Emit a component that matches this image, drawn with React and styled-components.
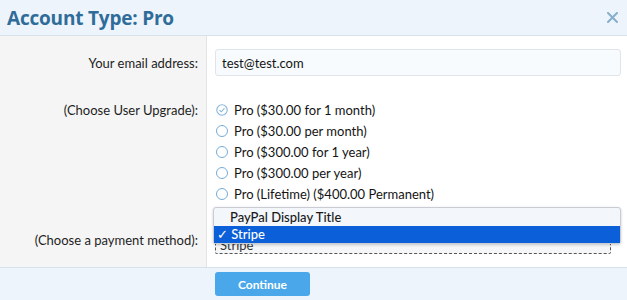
import React from 'react';
import styled, { createGlobalStyle } from 'styled-components';

const GlobalStyle = createGlobalStyle`
    html, body {
        margin: 0;
        padding: 0;
        background: #fff;
    }
    body {
        font-family: Lato, "Open Sans", sans-serif;
        font-size: 13px;
        color: #141414;
    }
`

const plans = [
    'Pro ($30.00 for 1 month)',
    'Pro ($30.00 per month)',
    'Pro ($300.00 for 1 year)',
    'Pro ($300.00 per year)',
    'Pro (Lifetime) ($400.00 Permanent)',
]

const CheckMark = () => (
    <svg width="12" height="12" viewBox="0 0 12 12">
        <circle cx="6" cy="6" r="5.2" fill="none" stroke="#86b6dc" strokeWidth="1.1" />
        <path d="M3.5 6.1 L5.2 7.8 L8.5 4.3" fill="none" stroke="#86b6dc" strokeWidth="1.1" />
    </svg>
)

const CloseIcon = () => (
    <svg width="11" height="11" viewBox="0 0 11 11">
        <path d="M1 1 L10 10 M10 1 L1 10" stroke="#86aecd" strokeWidth="2" strokeLinecap="round" />
    </svg>
)

const App = () => {
    return (
        <>
            <GlobalStyle />
            <Overlay>
                <Header>
                    <h2>Account Type: Pro</h2>
                    <Close><CloseIcon /></Close>
                </Header>
                <Body>
                    <Row top={13}>
                        <Label pad={6}>Your email address:</Label>
                        <Field>
                            <Input>test@test.com</Input>
                        </Field>
                    </Row>
                    <Row top={26}>
                        <Label pad={0}>(Choose User Upgrade):</Label>
                        <Field>
                            <Radios>
                                {plans.map((p, i) => (
                                    <Radio key={p}>
                                        {i === 0 ? <CheckMark /> : <Circle />}
                                        <span>{p}</span>
                                    </Radio>
                                ))}
                            </Radios>
                        </Field>
                    </Row>
                    <Row top={6} last>
                        <Label pad={24}>(Choose a payment method):</Label>
                        <Field>
                            <SelectWrap>
                                <Select>Stripe</Select>
                                <Arrow />
                                <Popup>
                                    <Option>PayPal Display Title</Option>
                                    <Option selected>&#x2713; Stripe</Option>
                                </Popup>
                            </SelectWrap>
                        </Field>
                    </Row>
                </Body>
                <Footer>
                    <Button>Continue</Button>
                </Footer>
            </Overlay>
        </>
    )
}

const Overlay = styled.div`
    width: 627px;
    height: 300px;
    display: flex;
    flex-direction: column;
    overflow: hidden;
`

const Header = styled.div`
    height: 35px;
    flex: none;
    background: #edf4fb;
    border-bottom: 1px solid #d8e2ea;
    display: flex;
    align-items: center;
    justify-content: space-between;
    padding: 0 7px;
    box-sizing: content-box;
    h2 {
        margin: 0;
        font-family: "Open Sans", Lato, sans-serif;
        font-weight: 700;
        font-size: 19px;
        color: #2f6c9a;
        letter-spacing: -0.2px;
    }
`

const Close = styled.span`
    display: flex;
    margin-right: 2px;
`

const Body = styled.div`
    flex: 1;
    display: flex;
    flex-direction: column;
    background: linear-gradient(to right, #f5f5f5 0, #f5f5f5 206px, #e4e4e4 206px, #e4e4e4 207px, #fff 207px);
`

const Row = styled.div`
    display: grid;
    grid-template-columns: 207px 1fr;
    padding-top: ${p => p.top}px;
    flex: ${p => (p.last ? 1 : 'none')};
`

const Label = styled.div`
    text-align: right;
    padding-right: 9px;
    padding-top: ${p => p.pad}px;
    line-height: 16px;
    color: #1e1e1e;
`

const Field = styled.div`
    padding: 0 6px 0 8px;
`

const Input = styled.div`
    height: 27px;
    box-sizing: border-box;
    border: 1px solid #dfe5ea;
    border-radius: 3px;
    background: #f8fbfd;
    padding: 5px 6px;
    line-height: 16px;
`

const Radios = styled.div`
    display: flex;
    flex-direction: column;
    gap: 5px;
`

const Radio = styled.div`
    display: flex;
    align-items: center;
    gap: 6px;
    height: 16px;
    padding-left: 1px;
`

const Circle = styled.span`
    width: 10px;
    height: 10px;
    border-radius: 50%;
    border: 1px solid #74acd8;
    background: #fff;
`

const SelectWrap = styled.div`
    position: relative;
    padding-top: 28px;
`

const Select = styled.div`
    height: 18px;
    width: 396px;
    box-sizing: border-box;
    border: 1px dashed #555;
    border-radius: 2px;
    padding: 0 4px;
    line-height: 16px;
    color: #333;
    background: #f4f6f8;
`

const Arrow = styled.span`
    position: absolute;
    top: 31px;
    right: 5px;
    width: 3px;
    height: 3px;
    background: #222;
`

const Popup = styled.div`
    position: absolute;
    top: -1px;
    left: -2px;
    right: 0;
    background: #f3f6fb;
    border: 1px solid #c9cdd3;
    border-radius: 3px;
    box-shadow: 0 1px 3px rgba(0, 0, 0, 0.2);
    padding-top: 1px;
`

const Option = styled.div`
    height: 17px;
    line-height: 17px;
    padding-left: ${p => (p.selected ? '3px' : '16px')};
    font-size: 13px;
    font-weight: 500;
    background: ${p => (p.selected ? '#0b5fd8' : 'transparent')};
    color: ${p => (p.selected ? '#fff' : '#1a1a1a')};
`

const Footer = styled.div`
    height: 33px;
    flex: none;
    background: #edf4fb;
    border-top: 1px solid #d8e2ea;
    padding-left: 215px;
    padding-top: 4px;
    box-sizing: border-box;
`

const Button = styled.div`
    width: 95px;
    height: 24px;
    border-radius: 3px;
    background: #4aa8ea;
    color: #fff;
    font-weight: 700;
    font-size: 12px;
    display: flex;
    align-items: center;
    justify-content: center;
`

export default App;
